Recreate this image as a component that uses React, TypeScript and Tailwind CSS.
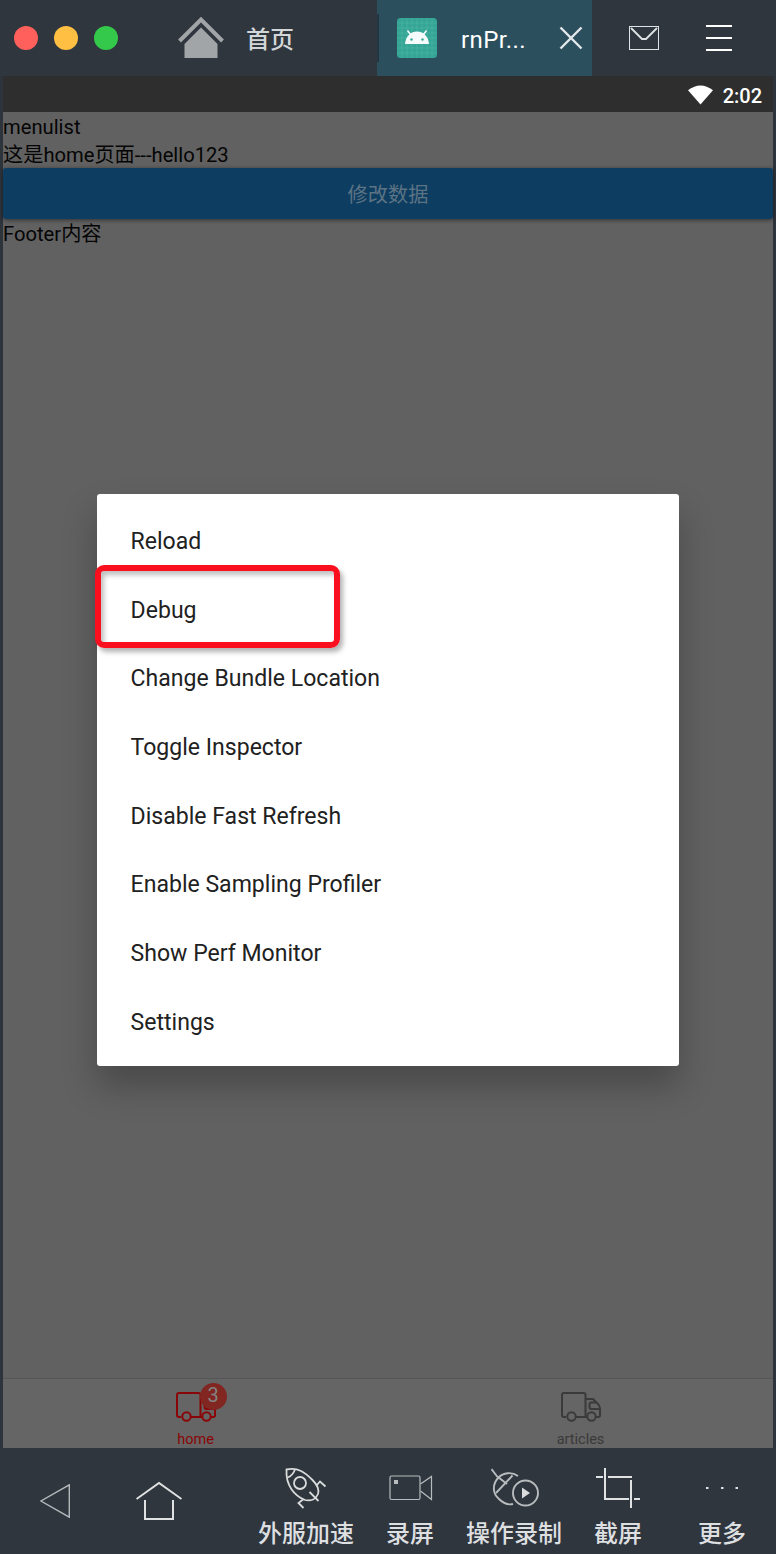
import React from 'react';

const menuItems = [
  'Reload',
  'Debug',
  'Change Bundle Location',
  'Toggle Inspector',
  'Disable Fast Refresh',
  'Enable Sampling Profiler',
  'Show Perf Monitor',
  'Settings',
];

const HomeSolidIcon = () => (
  <svg width="48" height="44" viewBox="0 0 48 44" fill="none">
    <path d="M2.500 25 24 3.500 45.500 25" stroke="#a2a5a8" strokeWidth="4" />
    <path d="M24 11.500 40.500 28v14h-33V28z" fill="#a2a5a8" />
  </svg>
);

const AndroidIcon = () => (
  <svg width="40" height="40" viewBox="0 0 40 40">
    <rect width="40" height="40" rx="3.500" fill="#35a596" />
    <path d="M5 0v40M10 0v40M15 0v40M20 0v40M25 0v40M30 0v40M35 0v40M0 5h40M0 10h40M0 15h40M0 20h40M0 25h40M0 30h40M0 35h40" stroke="#57b9ab" strokeWidth="0.500" />
    <path d="M10.500 12.500l3 4M29.500 12.500l-3 4" stroke="#f4fbfa" strokeWidth="1.500" />
    <path d="M8 26c.6-7 5-12.500 12-12.500s11.400 5.500 12 12.500z" fill="#f4fbfa" />
    <circle cx="14.500" cy="21.500" r="1.200" fill="#35a596" />
    <circle cx="25.500" cy="21.500" r="1.200" fill="#35a596" />
  </svg>
);

const TruckIcon = () => (
  <svg width="40" height="30" viewBox="0 0 40 30" fill="none" stroke="currentColor" strokeWidth="2">
    <path d="M5 25H3a2 2 0 0 1-2-2V3a2 2 0 0 1 2-2h19.500a2 2 0 0 1 2 2v22M15 25h11" />
    <path d="M24.500 7h7.500l5.500 5.500q1.500 2 1.500 4.500v6.500a1.500 1.500 0 0 1-1.500 1.500H35M38.500 17h-8a2 2 0 0 1-2-2v-2.500a2 2 0 0 1 2-2H35" />
    <circle cx="10.500" cy="24.500" r="4.200" />
    <circle cx="30.500" cy="24.500" r="4.200" />
  </svg>
);

const RocketIcon = () => (
  <svg width="44" height="44" viewBox="0 0 44 44" fill="none" stroke="#d9dbdc" strokeWidth="1.800">
    <path d="M2.500 3.500C14 1 21 6.500 28.500 14c5 5 7 9 5.500 14-2 5-7 7.500-13 6C11 30 1.500 20 2.500 3.500z" />
    <path d="M3.500 11.500Q8.500 10 11 3.500" />
    <circle cx="16" cy="17" r="6" />
    <path d="M25.500 26l9 9M32.500 19.500l3.500-4 5.500 5M19 33.500l-4.500 3.500 5 5" />
  </svg>
);

const CameraIcon = () => (
  <svg className="ml-0.5" width="44" height="28" viewBox="0 0 44 28" fill="none" stroke="#b9bcbe" strokeWidth="1.200">
    <rect x="1" y="2" width="30" height="23.500" rx="1.500" />
    <path d="M31.500 10 42.500 2.500v23L31.500 17" />
    <rect x="5" y="6" width="4" height="4" fill="#b9bcbe" stroke="none" />
  </svg>
);

const MouseRecordIcon = () => (
  <svg className="ml-1" width="50" height="40" viewBox="0 0 50 40" fill="none" stroke="#b9bcbe" strokeWidth="1.900">
    <path d="M.5 1l6 8M27 8C21 3.500 12 4.500 7.500 9.500 0.500 17 2 26 8 31c4 4 8.500 6.500 14 5" />
    <path d="M7 9l9 7M21.500 7.500 5 25" />
    <circle cx="34.500" cy="25" r="12.500" />
    <path d="M31 19.500v11l8-5.500z" fill="#d9dbdc" stroke="none" />
  </svg>
);

const CropIcon = () => (
  <svg width="44" height="40" viewBox="0 0 44 40" fill="none" stroke="#e0e2e3" strokeWidth="2">
    <path d="M0 9h7M12 9h24M9 0v31h24M35 12v28M38 31h6" />
  </svg>
);

const MoreIcon = () => (
  <svg width="34" height="4" viewBox="0 0 34 4" fill="#e0e2e3">
    <rect x="1" y="1" width="2.500" height="2" />
    <rect x="16" y="1" width="2.500" height="2" />
    <rect x="30.500" y="1" width="2.500" height="2" />
  </svg>
);

const tools = [
  { icon: <RocketIcon />, label: '外服加速' },
  { icon: <CameraIcon />, label: '录屏' },
  { icon: <MouseRecordIcon />, label: '操作录制' },
  { icon: <CropIcon />, label: '截屏' },
  { icon: <MoreIcon />, label: '更多' },
];

const TitleBar: React.FC = () => (
  <header className="flex h-[76px] shrink-0 items-center bg-[#2f363d]">
    <div className="flex gap-4 pl-[14px]">
      <span className="size-6 rounded-full bg-[#ff605b]" />
      <span className="size-6 rounded-full bg-[#ffbf43]" />
      <span className="size-6 rounded-full bg-[#34c94b]" />
    </div>
    <div className="ml-[59px] flex h-full w-[200px] items-center">
      <HomeSolidIcon />
      <span className="ml-[21px] pt-1 text-2xl font-medium text-[#d3d6d9]">首页</span>
    </div>
    <div className="flex h-full w-[215px] items-center bg-[#2c4f5e]">
      <span className="h-12 w-[2px] bg-[#223540]" />
      <span className="ml-[18px]"><AndroidIcon /></span>
      <span className="ml-6 w-[65px] pt-[3px] text-2xl tracking-[0.400px] whitespace-nowrap text-white">rnPr...</span>
      <svg className="ml-[33px]" width="24" height="24" viewBox="0 0 24 24" stroke="#e3e8ea" strokeWidth="2.400">
        <path d="M1.500 1.500l21 21M22.500 1.500l-21 21" />
      </svg>
    </div>
    <svg className="ml-[37px]" width="30" height="24" viewBox="0 0 30 24" fill="none" stroke="#e0e3e5">
      <rect x="0.500" y="0.500" width="29" height="23" />
      <path d="M2 2l11 11h4L28 2" strokeWidth="1.800" />
    </svg>
    <svg className="ml-[47px]" width="26" height="26" viewBox="0 0 26 26" stroke="#fff" strokeWidth="2">
      <path d="M0 1h26M0 13h26M0 25h26" />
    </svg>
  </header>
);

const ToolBar: React.FC = () => (
  <footer className="flex h-[106px] shrink-0 bg-[#2f363d]">
    <div className="flex w-[254px] items-center pl-10">
      <svg width="30" height="34" viewBox="0 0 30 34" fill="none" stroke="#b4b8bb" strokeWidth="1.400">
        <path d="M29.300 .8v32.400L1 17z" />
      </svg>
      <svg className="ml-[66px]" width="46" height="40" viewBox="0 0 46 40" fill="none" stroke="#dfe1e2" strokeWidth="2">
        <path d="M.5 18 23 2l22.500 16M9 19v19h28V19" />
      </svg>
    </div>
    {tools.map((tool) => (
      <div key={tool.label} className="flex w-[104px] flex-col items-center pt-[18px]">
        <div className="flex h-11 items-center">{tool.icon}</div>
        <span className="mt-1.5 text-2xl leading-9 font-medium whitespace-nowrap text-[#dddfe0]">{tool.label}</span>
      </div>
    ))}
  </footer>
);

const App: React.FC = () => {
  return (
    <div className="flex h-[1554px] w-[776px] flex-col overflow-hidden bg-[#2d343b] font-['Roboto','Noto_Sans_CJK_SC',sans-serif]">
      <TitleBar />

      <main className="relative mx-[3px] flex min-h-0 flex-1 flex-col bg-[#616161] text-[20.200px] text-[#050505]">
        <div className="flex h-9 items-center justify-end bg-[#2e2e2e] pr-[11px] text-xl font-medium text-white">
          <svg className="mt-0.5 mr-2.5" width="25" height="20" viewBox="0 0 26 20" fill="#fff">
            <path d="M0 5Q13-5 26 5L13 20z" />
          </svg>
          <span className="pt-[3px] leading-9">2:02</span>
        </div>

        <p className="h-7 pt-px leading-7">menulist</p>
        <p className="h-7 pt-px leading-7">这是home页面---hello123</p>
        <div className="flex h-[51px] items-center justify-center rounded-[3px] bg-[#0d3d61] pt-[3px] text-[#5c7384] shadow-[0_1px_4px_rgba(0,0,0,0.5)]">修改数据</div>
        <p className="pt-px leading-7">Footer内容</p>

        <nav className="mt-auto flex h-[70px] border-t border-[#555] bg-[#656565] text-[14.500px]">
          <div className="flex flex-1 flex-col items-center pt-[13px] text-[#8a0507]">
            <div className="relative h-[30px]">
              <TruckIcon />
              <span className="absolute -top-[9px] left-[24px] flex size-[27px] items-center justify-center rounded-full bg-[#812620] pb-[3px] text-xl leading-none text-[#838383]">3</span>
            </div>
            <span className="mt-2 leading-5">home</span>
          </div>
          <div className="flex flex-1 flex-col items-center pt-[13px] text-[#3a3a3a]">
            <div className="h-[30px]">
              <TruckIcon />
            </div>
            <span className="mt-2 leading-5">articles</span>
          </div>
        </nav>

        {/* Dev menu */}
        <ul className="absolute top-[418px] left-[94px] h-[572px] w-[582px] rounded-[3px] bg-white py-[14.200px] text-[23.060px] text-[#212121] shadow-[0_20px_34px_rgba(0,0,0,0.25)]">
          {menuItems.map((item) => (
            <li key={item} className="flex h-[68.640px] items-center pl-[33.600px]">{item}</li>
          ))}
          <li className="absolute top-[71px] -left-[2px] h-[83px] w-[245px] rounded-[9px] border-[6px] border-[#fa0f1e] shadow-[3px_4px_5px_rgba(0,0,0,0.3),inset_3px_4px_5px_rgba(0,0,0,0.25)]" />
        </ul>
      </main>

      <ToolBar />
    </div>
  );
};

export default App;
